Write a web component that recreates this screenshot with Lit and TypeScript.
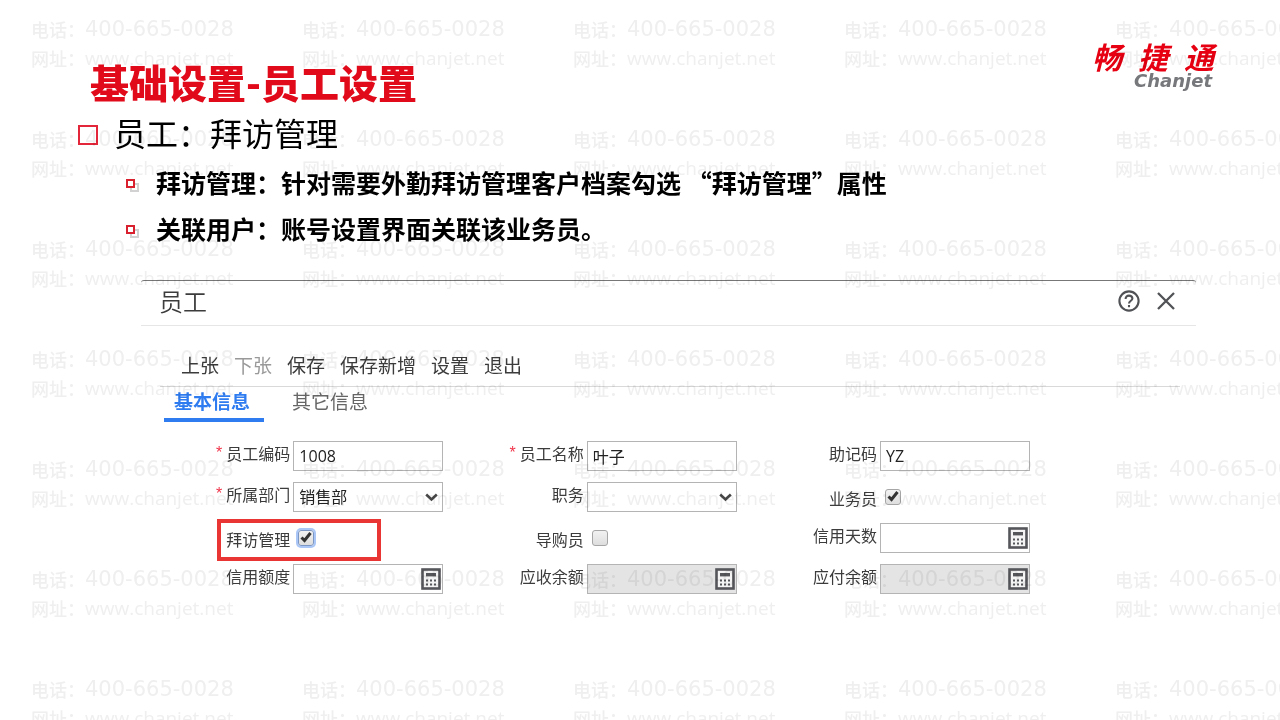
import { LitElement, html, svg, css, nothing } from "lit";
import { customElement } from "lit/decorators.js";
import { classMap } from "lit/directives/class-map.js";

type Kind = "text" | "select" | "check" | "amount";

interface Field {
  id: string;
  label: string;
  kind: Kind;
  value?: string;
  required?: boolean;
  checked?: boolean;
  disabled?: boolean;
  marked?: boolean;
}

const FIELDS: Field[] = [
  { id: "code", label: "员工编码", kind: "text", value: "1008", required: true },
  { id: "name", label: "员工名称", kind: "text", value: "叶子", required: true },
  { id: "memo", label: "助记码", kind: "text", value: "YZ" },
  { id: "dept", label: "所属部门", kind: "select", value: "销售部", required: true },
  { id: "duty", label: "职务", kind: "select", value: "" },
  { id: "sales", label: "业务员", kind: "check", checked: true },
  { id: "visit", label: "拜访管理", kind: "check", checked: true, marked: true },
  { id: "guide", label: "导购员", kind: "check" },
  { id: "days", label: "信用天数", kind: "amount" },
  { id: "credit", label: "信用额度", kind: "amount" },
  { id: "receivable", label: "应收余额", kind: "amount", disabled: true },
  { id: "payable", label: "应付余额", kind: "amount", disabled: true },
];

const ACTIONS = ["上张", "下张", "保存", "保存新增", "设置", "退出"];

@customElement("app-root")
export class AppRoot extends LitElement {
  static styles = css`
    :host {
      display: block;
      position: relative;
      min-height: 100vh;
      overflow: hidden;
      background: #fff;
      color: #000;
      font-family: "Noto Sans CJK SC", sans-serif;
    }
    * {
      box-sizing: border-box;
    }
    h1, h2, h3, p, ul {
      margin: 0;
      padding: 0;
    }
    button {
      border: 0;
      padding: 0;
      background: none;
      font: inherit;
      color: inherit;
    }
    svg {
      display: block;
    }

    .marks {
      position: absolute;
      inset: 0;
      overflow: hidden;
      pointer-events: none;
      mix-blend-mode: multiply;
      display: grid;
      grid-template-columns: repeat(5, 271px);
      grid-auto-rows: 110px;
      padding: 15px 0 0 31px;
      color: #efefef;
      font-size: 18px;
      font-weight: 500;
      line-height: 29px;
      white-space: nowrap;
    }
    .mark-line {
      display: flex;
      height: 29px;
    }
    .phone {
      font-family: "DejaVu Sans", sans-serif;
      font-size: 21px;
    }
    .site {
      font-family: "Open Sans", sans-serif;
      font-size: 19px;
      font-weight: 500;
    }

    .top {
      display: flex;
      justify-content: space-between;
      align-items: flex-start;
      padding: 40px 64px 0 90px;
    }
    .title {
      margin-top: 14px;
      font-size: 39px;
      font-weight: 900;
      line-height: 54px;
      color: #e10a1a;
    }
    .logo {
      display: flex;
      flex-direction: column;
      align-items: flex-end;
      font-style: italic;
      font-weight: 700;
    }
    .logo-cn {
      display: flex;
      gap: 16px;
      padding-right: 2px;
      font-size: 30px;
      line-height: 32px;
      color: #e60012;
    }
    .logo-en {
      padding-right: 4px;
      font-family: "DejaVu Sans", sans-serif;
      font-size: 18px;
      line-height: 18px;
      color: #77787b;
    }

    .topic {
      display: flex;
      align-items: center;
      gap: 16px;
      padding: 2px 0 0 78px;
      font-size: 32px;
      font-weight: 400;
      line-height: 44px;
    }
    .box {
      width: 20px;
      height: 20px;
      margin-top: 6px;
      border: 2px solid #e3263a;
    }
    .points {
      padding: 5px 0 0 126px;
      list-style: none;
    }
    .point {
      display: flex;
      align-items: center;
      gap: 17px;
      font-size: 25px;
      font-weight: 700;
      line-height: 46px;
    }
    .twin {
      flex: none;
      width: 13px;
      height: 13px;
      margin-top: 6px;
    }

    .panel {
      margin: 29px 84px 0 141px;
      border-top: 1px solid #777;
      border-radius: 3px 3px 0 0;
      color: #3c3c3c;
    }
    .panel-head {
      display: flex;
      align-items: center;
      justify-content: space-between;
      height: 45px;
      padding: 0 20px 5px 18px;
      border-bottom: 1px solid #e6e6e6;
    }
    .panel-title {
      font-size: 24px;
      font-weight: 350;
      line-height: 36px;
    }
    .tools {
      display: flex;
      align-items: center;
      gap: 16px;
    }
    .actions {
      display: flex;
      gap: 15px;
      margin: 0 16px 0 19px;
      padding: 25px 0 7px 21px;
      border-bottom: 1px solid #d9d9d9;
      font-size: 19px;
      line-height: 28px;
    }
    .dim {
      color: #999;
    }
    .tabs {
      display: flex;
      gap: 18px;
      padding-left: 23px;
      font-size: 19px;
      line-height: 28px;
    }
    .tab {
      height: 35px;
      padding: 0 10px 3px;
      border-bottom: 4px solid transparent;
      color: #666;
      text-align: left;
    }
    .tab.on {
      width: 100px;
      border-color: #2f7cf0;
      color: #2f7cf0;
      font-weight: 700;
    }

    .form {
      display: grid;
      grid-template-columns: repeat(3, 1fr);
      row-gap: 10px;
      padding: 18px 166px 0 9px;
      font-size: 16px;
      line-height: 24px;
    }
    .field {
      position: relative;
      display: flex;
      align-items: center;
      justify-content: flex-end;
      gap: 3px;
      height: 31px;
    }
    .label {
      display: flex;
      gap: 4px;
      padding-bottom: 6px;
    }
    .check .label {
      padding: 2px 0 0;
    }
    .star {
      color: #f0344a;
      font-family: "Liberation Sans", sans-serif;
    }
    .control {
      position: relative;
      display: flex;
      align-items: center;
      width: 150px;
      height: 30px;
    }
    .check .control {
      padding-left: 5px;
    }
    .entry {
      appearance: none;
      width: 100%;
      height: 100%;
      margin: 0;
      padding: 0 5px;
      border: 1px solid #b4b4b4;
      border-radius: 0;
      background: #fff;
      color: #222;
      font-family: "Open Sans", "Noto Sans CJK SC", sans-serif;
      font-size: 16px;
      opacity: 1;
    }
    .entry:disabled {
      background: #e4e4e4;
    }
    .arrow {
      position: absolute;
      right: 5px;
      top: 11px;
      pointer-events: none;
    }
    .calc {
      position: absolute;
      right: 2px;
      top: 4px;
    }
    .tick {
      appearance: none;
      width: 16px;
      height: 16px;
      margin: 0;
      border: 1px solid #a6a6a6;
      border-radius: 3px;
      background: linear-gradient(#f2f2f2, #dedede);
    }
    .marked .tick {
      border-color: #7d97c4;
      box-shadow: 0 0 0 2px #a9c6f7;
    }
    .tick-mark {
      position: absolute;
      left: 6px;
      top: 7px;
      pointer-events: none;
    }
    .frame {
      position: absolute;
      inset: -3px 62px -8px 67px;
      border: 4px solid #ea3535;
      pointer-events: none;
    }
  `;

  private control(f: Field) {
    if (f.kind === "check") {
      return html`<input class="tick" type="checkbox" id=${f.id} .checked=${!!f.checked} />
        ${f.checked
          ? html`<svg class="tick-mark" width="14" height="14" viewBox="0 0 14 14">
              <path d="M2.5 7.5 5.5 10.5 11.5 3" fill="none" stroke="#333" stroke-width="3" />
            </svg>`
          : nothing}`;
    }
    if (f.kind === "select") {
      return html`<select class="entry" id=${f.id}>
          <option>${f.value}</option>
        </select>
        <svg class="arrow" width="13" height="9" viewBox="0 0 13 9">
          <path d="M1.2 1.5 6.5 6.5 11.8 1.5" fill="none" stroke="#484848" stroke-width="2.6" />
        </svg>`;
    }
    if (f.kind === "amount") {
      const dots = [5, 9, 13].flatMap((x) =>
        [11.5, 15.5].map((y) => svg`<rect x=${x} y=${y} width="2" height="2" fill="#55565a" />`)
      );
      return html`<input class="entry" id=${f.id} type="text" ?disabled=${!!f.disabled} />
        <button class="calc" type="button" aria-label="计算器">
          <svg width="20" height="22" viewBox="0 0 20 22">
            <rect x="1.5" y="1.5" width="17" height="19" fill="#f4f4f4" stroke="#55565a" stroke-width="2.6" />
            <rect x="5" y="5" width="10" height="3.4" fill="#55565a" />
            ${dots}
          </svg>
        </button>`;
    }
    return html`<input class="entry" id=${f.id} type="text" .value=${f.value ?? ""} />`;
  }

  private field(f: Field) {
    return html`<div class=${classMap({ field: true, check: f.kind === "check", marked: !!f.marked })}>
      <label class="label" for=${f.id}>
        ${f.required ? html`<span class="star">*</span>` : nothing}<span>${f.label}</span>
      </label>
      <div class="control">${this.control(f)}</div>
      ${f.marked ? html`<div class="frame"></div>` : nothing}
    </div>`;
  }

  private point(text: string) {
    return html`<li class="point">
      <svg class="twin" viewBox="0 0 13 13">
        <rect x="5" y="5" width="7" height="7" fill="none" stroke="#d2d2d2" stroke-width="2" />
        <rect x="1" y="1" width="7" height="7" fill="#fff" stroke="#d8202f" stroke-width="2" />
      </svg>
      <span>${text}</span>
    </li>`;
  }

  render() {
    return html`
      <header class="top" lang="zh-CN">
        <h1 class="title">基础设置-员工设置</h1>
        <div class="logo">
          <div class="logo-cn"><span>畅</span><span>捷</span><span>通</span></div>
          <div class="logo-en">Chanjet</div>
        </div>
      </header>
      <main lang="zh-CN">
        <h2 class="topic"><span class="box"></span>员工：拜访管理</h2>
        <ul class="points">
          ${this.point("拜访管理：针对需要外勤拜访管理客户档案勾选 “拜访管理”属性")}
          ${this.point("关联用户：账号设置界面关联该业务员。")}
        </ul>
        <section class="panel">
          <div class="panel-head">
            <h3 class="panel-title">员工</h3>
            <div class="tools">
              <button type="button" aria-label="帮助">
                <svg width="22" height="22" viewBox="0 0 22 22" fill="none" stroke="#505255" stroke-width="2.1">
                  <circle cx="11" cy="11" r="9.6" />
                  <path d="M7.6 8.9C7.6 6.8 9 5.6 11 5.6S14.4 6.8 14.4 8.5C14.4 10.8 11 10.8 11 13.6" />
                  <path d="M11 15v2.2" />
                </svg>
              </button>
              <button type="button" aria-label="关闭">
                <svg width="20" height="20" viewBox="0 0 20 20" fill="none" stroke="#505255" stroke-width="2.3">
                  <path d="M2 2 18 18M18 2 2 18" />
                </svg>
              </button>
            </div>
          </div>
          <div class="actions">
            ${ACTIONS.map((a) => html`<button type="button" class=${classMap({ dim: a === "下张" })}>${a}</button>`)}
          </div>
          <div class="tabs" role="tablist">
            <button type="button" role="tab" aria-selected="true" class="tab on">基本信息</button>
            <button type="button" role="tab" aria-selected="false" class="tab">其它信息</button>
          </div>
          <form class="form">${FIELDS.map((f) => this.field(f))}</form>
        </section>
      </main>
      <div class="marks" lang="zh-CN" aria-hidden="true">
        ${Array.from(
          { length: 35 },
          () => html`<div>
            <div class="mark-line">电话：<span class="phone">400-665-0028</span></div>
            <div class="mark-line">网址：<span class="site">www.chanjet.net</span></div>
          </div>`
        )}
      </div>
    `;
  }
}
